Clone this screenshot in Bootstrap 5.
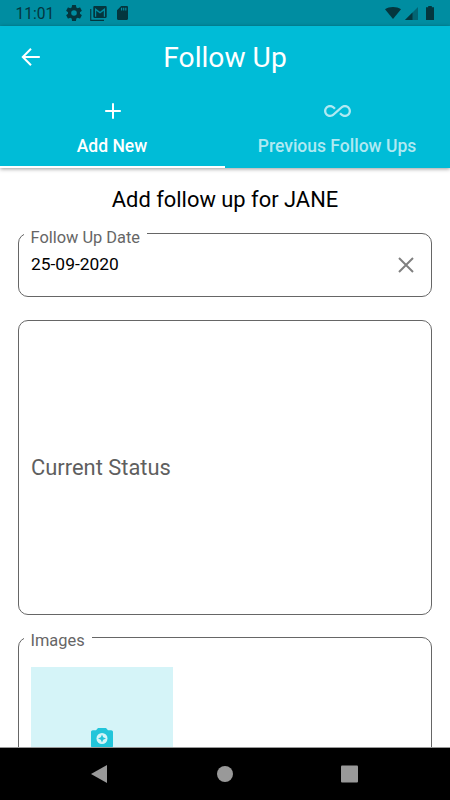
<!DOCTYPE html>
<html lang="en">
<head>
<meta charset="utf-8">
<meta name="viewport" content="width=device-width, initial-scale=1">
<title>Follow Up</title>
<link rel="stylesheet" href="https://cdn.jsdelivr.net/npm/bootstrap@5.3.0/dist/css/bootstrap.min.css">
<style>
body{font-family:Roboto,"Liberation Sans",sans-serif;height:800px;color:#000}
svg{display:block;flex:none}
.statusbar{height:26px;background:#008da1;color:#04363e;padding:0 16px 0 15.5px}
.clock{font-size:15.6px;line-height:26px;width:50.5px;padding-top:1px}
.sdcard{margin-left:9.5px}
.battery{margin-left:8px}
.app-head{height:142px;background:#00bcd7;box-shadow:0 1px 4px rgba(0,0,0,.4);z-index:2}
.titlebar{height:62px;padding:0 19px}
.titlebar h1{font-size:28.2px;line-height:62px;font-weight:400;padding-top:1px}
.side{width:24px}
.tab{height:80px;padding-top:12px;font-size:17.5px;font-weight:500;color:#fff;border-bottom:2px solid transparent;text-decoration:none}
.tab span{line-height:24px;margin-top:12px;margin-right:1px}
.tab.on{border-color:#fff}
.tab:not(.on){color:#b0e9f2}
.content{height:580px;padding:0 18px;border-bottom:1px solid #999}
.heading{font-size:21.9px;line-height:28px;margin:18px 0 19px}
.field{border:1px solid #666;border-radius:10px;padding:0 12px}
.field-tag{left:4.5px;top:-7px;padding:0 7px;background:#fff;color:#666;font-size:16.4px;line-height:22px}
.images .field-tag{top:-8px}
.date{height:64px;font-size:17.4px;line-height:22px;padding-right:17px;padding-bottom:2px}
.clear-date{margin-top:2px}
.status{height:295px;margin-top:23px;padding-top:2px;font-size:21.9px;color:#5f5f5f}
.images{height:200px;margin-top:22px;padding-top:28.5px}
.tile{width:142px;height:142px;background:#d5f4f8}
.sysbar{height:52px;background:#000}
</style>
<script src="https://cdn.jsdelivr.net/npm/bootstrap@5.3.0/dist/js/bootstrap.bundle.min.js"></script>
</head>
<body class="d-flex flex-column overflow-hidden bg-white">
<div class="statusbar d-flex align-items-center flex-shrink-0">
  <div class="clock">11:01</div>
  <svg width="16" height="16" viewBox="2 2 20 20" fill="currentColor"><path d="M19.43 12.98c.04-.32.07-.64.07-.98s-.03-.66-.07-.98l2.11-1.65a.5.5 0 0 0 .12-.64l-2-3.46a.5.5 0 0 0-.61-.22l-2.49 1a7.3 7.3 0 0 0-1.69-.98l-.38-2.65A.49.49 0 0 0 14 2h-4a.49.49 0 0 0-.49.42l-.38 2.65c-.61.25-1.17.59-1.69.98l-2.49-1a.5.5 0 0 0-.61.22l-2 3.46a.5.5 0 0 0 .12.64l2.11 1.65a7.9 7.9 0 0 0 0 1.96l-2.11 1.65a.5.5 0 0 0-.12.64l2 3.46c.12.22.39.3.61.22l2.49-1c.52.4 1.08.73 1.69.98l.38 2.65c.03.24.24.42.49.42h4c.25 0 .46-.18.49-.42l.38-2.65a7.3 7.3 0 0 0 1.69-.98l2.49 1c.23.09.49 0 .61-.22l2-3.46a.5.5 0 0 0-.12-.64zM12 15.5a3.5 3.5 0 1 1 0-7 3.5 3.5 0 0 1 0 7z"/></svg>
  <svg class="ms-2" width="17" height="15" viewBox="0 0 17 15" fill="currentColor"><path d="M.2 3h1.1v10.8H14V15H.2z"/><path fill-rule="evenodd" d="M4.5 0h11c.7 0 1.2.5 1.2 1.2v9.6c0 .7-.5 1.2-1.2 1.2h-11c-.7 0-1.2-.5-1.2-1.2V1.2C3.3.5 3.8 0 4.5 0zM5 2v8.800h1.200V4.800L10 7.600l3.800-2.800v6H15V2l-5 3.700z"/></svg>
  <svg width="11" height="14" viewBox="0 0 11 14" fill="currentColor" class="sdcard me-auto"><path fill-rule="evenodd" d="M4.200 0h5.600C10.500 0 11 .5 11 1.200v11.600c0 .7-.5 1.200-1.200 1.200H1.200C.5 14 0 13.500 0 12.800V4.200zM4 1.800v2.700h1.200V1.800zm2.100 0v2.700h1.200V1.800zm2.100 0v2.700h1.200V1.800z"/></svg>
  <svg width="16" height="12" viewBox="0 0 16 12" fill="currentColor"><path d="M8 12 0 2.200C2.200.7 5 0 8 0s5.800.7 8 2.200z"/></svg>
  <svg class="ms-1" width="13" height="13" viewBox="0 0 13 13"><path fill="#04363e" fill-opacity=".45" d="M13 0v13H0z"/><path fill="#04363e" d="M7.500 5.500V13H0z"/></svg>
  <svg class="battery" width="8" height="14" viewBox="0 0 8 14" fill="currentColor"><path d="M2.200 0h3.600v1.200H8V14H0V1.200h2.200z"/></svg>
</div>
<header class="app-head position-relative flex-shrink-0">
  <div class="titlebar d-flex align-items-center">
    <svg class="side" height="24" viewBox="0 0 24 24" fill="none" stroke="#fff" stroke-width="2"><path d="M20.800 12H4M12 3.800 3.800 12l8.200 8.200"/></svg>
    <h1 class="flex-fill text-center text-white m-0">Follow Up</h1>
    <div class="side"></div>
  </div>
  <nav class="row g-0">
    <a href="#" class="tab on col-6 d-flex flex-column align-items-center"><svg width="22" height="22" viewBox="0 0 22 22" stroke="currentColor" stroke-width="2"><path d="M11 3.200v15.600M3.200 11h15.600"/></svg><span>Add New</span></a>
    <a href="#" class="tab col-6 d-flex flex-column align-items-center"><svg width="27" height="22" viewBox="0 2.200 24 19.600" fill="currentColor"><path d="M18.600 6.620c-1.440 0-2.800.56-3.770 1.530L12 10.660 10.480 12h.01L7.800 14.390c-.64.64-1.490.99-2.400.99-1.870 0-3.390-1.510-3.390-3.380S3.530 8.620 5.400 8.620c.91 0 1.760.35 2.440 1.030l1.130 1 1.510-1.340L9.220 8.200C8.200 7.180 6.840 6.620 5.400 6.620 2.420 6.620 0 9.040 0 12s2.420 5.380 5.400 5.380c1.440 0 2.800-.56 3.770-1.530l2.830-2.500.01.01L13.520 12h-.01l2.690-2.390c.64-.64 1.490-.99 2.400-.99 1.870 0 3.390 1.510 3.390 3.380s-1.520 3.380-3.390 3.380c-.9 0-1.760-.35-2.440-1.030l-1.140-1.010-1.510 1.340 1.270 1.120c1.020 1.010 2.370 1.570 3.820 1.570 2.980 0 5.400-2.410 5.400-5.380s-2.420-5.370-5.400-5.370z"/></svg><span>Previous Follow Ups</span></a>
  </nav>
</header>
<main class="content overflow-hidden flex-shrink-0">
  <h2 class="heading fw-normal text-center">Add follow up for JANE</h2>
  <div class="field date position-relative d-flex align-items-center justify-content-between">
    <span class="field-tag position-absolute">Follow Up Date</span>
    <span>25-09-2020</span>
    <svg class="clear-date" width="16" height="16" viewBox="0 0 16 16" stroke="#808080" stroke-width="2"><path d="m1 1 14 14M15 1 1 15"/></svg>
  </div>
  <div class="field status d-flex align-items-center">Current Status</div>
  <div class="field images position-relative">
    <span class="field-tag position-absolute">Images</span>
    <div class="tile d-flex align-items-center justify-content-center">
      <svg width="22" height="22" viewBox="0 0 22 22"><path fill="#22c5da" d="M7 1h8l2 2.200h3.200c1 0 1.800.8 1.800 1.800v14c0 1-.8 1.800-1.800 1.800H1.800C.8 20.800 0 20 0 19V5c0-1 .8-1.800 1.800-1.800H5z"/><circle cx="11" cy="11.500" r="5.500" fill="#d5f4f8"/><path fill="#22c5da" d="m11 7.500 1.200 2.800 2.800 1.200-2.800 1.200-1.200 2.800-1.200-2.800L7 11.500l2.800-1.200z"/></svg>
    </div>
  </div>
</main>
<footer class="sysbar flex-shrink-0 d-flex align-items-center justify-content-center">
  <svg width="270" height="20" viewBox="0 0 270 20" fill="#999"><path d="M17 1v18L1 10z"/><circle cx="135" cy="10" r="8"/><rect x="251" y="1.500" width="17" height="17" rx="1"/></svg>
</footer>
</body>
</html>
